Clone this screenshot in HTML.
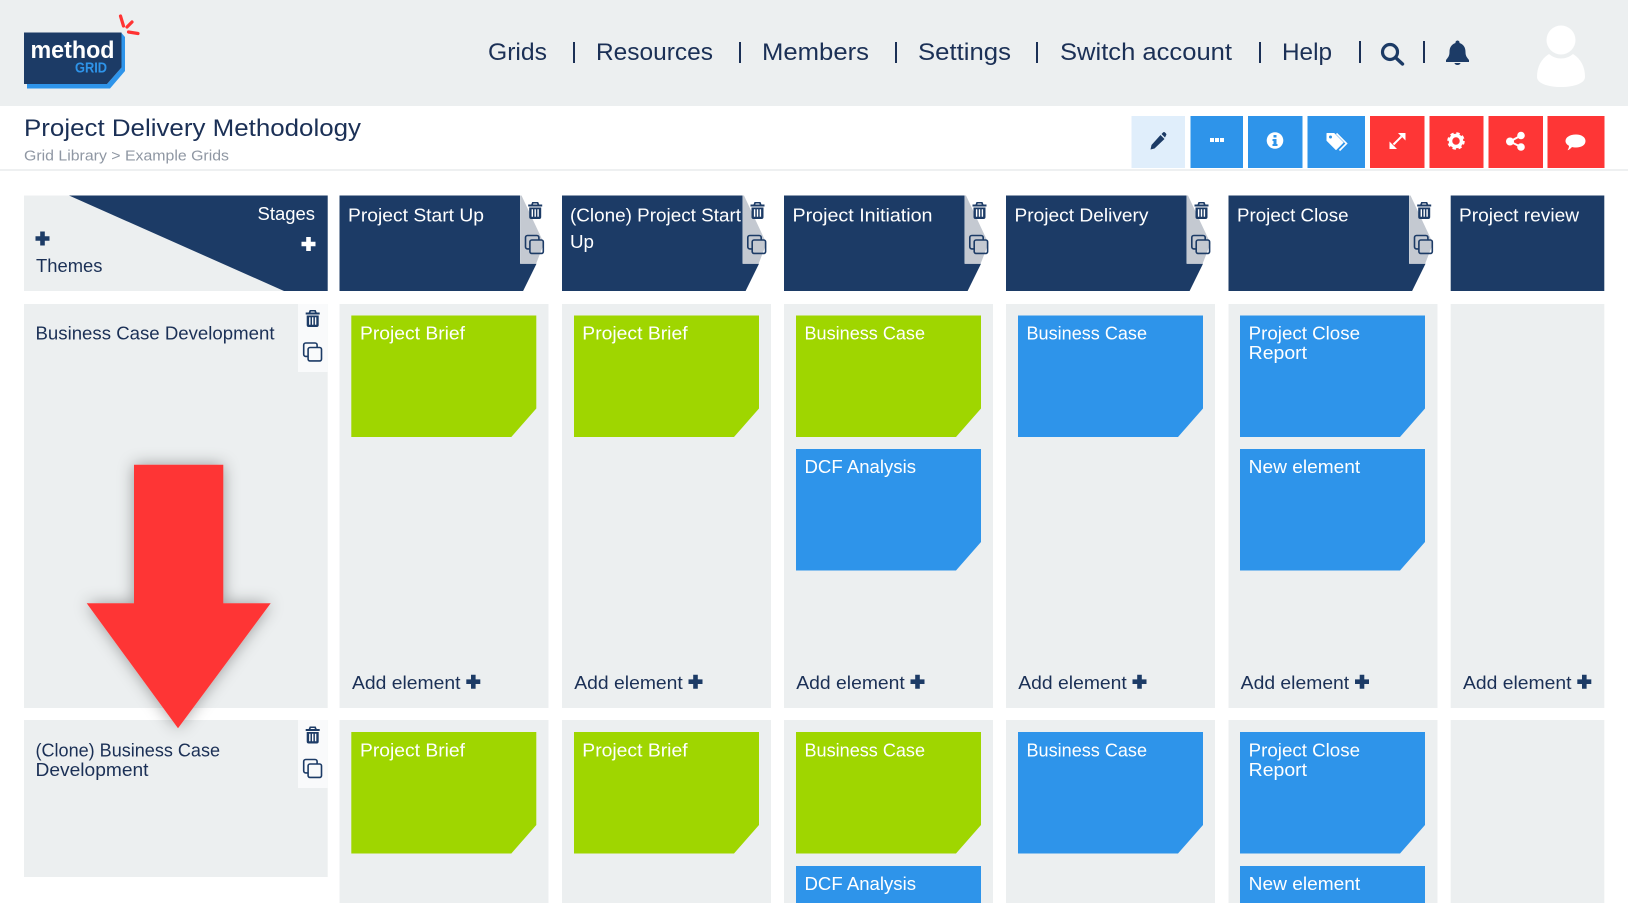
<!DOCTYPE html>
<html><head><meta charset="utf-8"><title>Project Delivery Methodology</title>
<style>
html,body{margin:0;padding:0;background:#fff;width:1628px;height:903px;overflow:hidden}
svg{display:block}
text{font-family:"Liberation Sans",sans-serif;font-size:18px}
.w{fill:#fff}.n{fill:#1b3056}
.nav{font-size:24.5px;fill:#1b3056}
</style></head><body>
<svg width="1628" height="903" viewBox="0 0 1628 903" xmlns="http://www.w3.org/2000/svg">
<defs>
<filter id="sh" x="-30%" y="-20%" width="160%" height="140%"><feDropShadow dx="0" dy="0" stdDeviation="8" flood-color="#000" flood-opacity=".36"/></filter>
<path id="c" d="M0 0H185V93L160 121.5H0Z"/>
<path id="p" d="M-2.3-7H2.3V-2.3H7V2.3H2.3V7H-2.3V2.3H-7V-2.3H-2.3Z" stroke-linejoin="round"/>
<path id="tr" fill-rule="evenodd" d="M-3-8.5H3L4-6H7V-4H-7V-6H-4ZM-1.8-7L-2.2-6H2.2L1.8-7ZM-6-3H6V6.5A2 2 0 0 1 4 8.5H-4A2 2 0 0 1-6 6.5ZM-3.6-1.2V6.2H-2.2V-1.2ZM-.7-1.2V6.2H.7V-1.2ZM2.2-1.2V6.2H3.6V-1.2Z"/>
<g id="cp" fill="none" stroke-width="1.6"><path d="M-5 3.4H-7A2 2 0 0 1-9 1.4V-8A2 2 0 0 1-7-10H2.4A2 2 0 0 1 4.4-8V-5.5"/><rect x="-4.6" y="-5.5" width="13.4" height="13.4" rx="1.8"/></g>
<g id="hd"><path d="M0 0H180.600V68.200H197L183.600 95.500H0Z" fill="#1c3b66"/><path d="M181 0H182L204.500 48 196.600 68.200H181Z" fill="#c4c9d1"/></g>
</defs>

<!-- top header -->
<rect width="1628" height="106" fill="#eceff0"/>
<rect y="169" width="1628" height="2" fill="#eef0f1"/>

<!-- logo -->
<path d="M27 88.500H110L125 71V37L121.500 33V67.500L107 84H27Z" fill="#2e94ea"/>
<path d="M24 32.500H121.500V67.500L107 84H24Z" fill="#1c3b66"/>
<text x="30.500" y="58" class="w" style="font-size:24px;font-weight:bold" textLength="84" lengthAdjust="spacingAndGlyphs">method</text>
<text x="75" y="72.500" style="font-size:14.500px;font-weight:bold;fill:#2e94ea" textLength="32" lengthAdjust="spacingAndGlyphs">GRID</text>
<g stroke="#f33" stroke-width="3.200" stroke-linecap="round"><path d="M120.500 16L123.500 26M132 22L127 27M128.500 32L138 33.500"/></g>

<!-- nav -->
<text x="488" y="60" class="nav" textLength="59" lengthAdjust="spacingAndGlyphs">Grids</text>
<text x="596" y="60" class="nav" textLength="117" lengthAdjust="spacingAndGlyphs">Resources</text>
<text x="762" y="60" class="nav" textLength="107" lengthAdjust="spacingAndGlyphs">Members</text>
<text x="918" y="60" class="nav" textLength="93" lengthAdjust="spacingAndGlyphs">Settings</text>
<text x="1060" y="60" class="nav" textLength="172" lengthAdjust="spacingAndGlyphs">Switch account</text>
<text x="1282" y="60" class="nav" textLength="50" lengthAdjust="spacingAndGlyphs">Help</text>
<g fill="#1b3056"><rect x="573" y="42" width="2" height="21"/><rect x="739" y="42" width="2" height="21"/><rect x="895" y="42" width="2" height="21"/><rect x="1036" y="42" width="2" height="21"/><rect x="1259" y="42" width="2" height="21"/><rect x="1359" y="41" width="2" height="22"/><rect x="1423" y="41" width="2" height="22"/></g>
<circle cx="1390" cy="52" r="7.500" fill="none" stroke="#1c3b66" stroke-width="3.200"/>
<path d="M1395.500 57.500L1402.500 64" stroke="#1c3b66" stroke-width="3.400" stroke-linecap="round"/>
<path d="M1457.500 40.500A2 2 0 0 1 1459.500 43C1464 44.500 1465.500 48 1465.500 52C1465.500 56 1467 57.500 1469 60V62H1446V60C1448 57.500 1449.500 56 1449.500 52C1449.500 48 1451 44.500 1455.500 43A2 2 0 0 1 1457.500 40.500ZM1454.500 63H1460.500A3 2 0 0 1 1454.500 63Z" fill="#1c3b66"/>
<circle cx="1561" cy="40" r="14.500" fill="#fff"/>
<path d="M1549 54C1556 60 1566 60 1573 54C1581 59 1585 67 1585 77C1585 83 1575 87 1561 87C1547 87 1537 83 1537 77C1537 67 1541 59 1549 54Z" fill="#fff"/>

<!-- title -->
<text x="24" y="136" class="n" style="font-size:24.500px" textLength="337" lengthAdjust="spacingAndGlyphs">Project Delivery Methodology</text>
<text x="24" y="160.500" style="font-size:15px;fill:#8f97a3" textLength="205" lengthAdjust="spacingAndGlyphs">Grid Library &gt; Example Grids</text>

<!-- toolbar -->
<rect x="1131.500" y="116" width="53.500" height="52" fill="#e0eefb"/>
<g fill="#2e94ea"><rect x="1190.500" y="116" width="52.500" height="52"/><rect x="1248" y="116" width="54.500" height="52"/><rect x="1307.500" y="116" width="57.500" height="52"/></g>
<g fill="#fe3636"><rect x="1370" y="116" width="54.500" height="52"/><rect x="1429.500" y="116" width="54" height="52"/><rect x="1488.500" y="116" width="54.500" height="52"/><rect x="1547.500" y="116" width="57" height="52"/></g>
<path d="M1160.500 135L1164.500 139L1154.500 148.500L1150.500 149.500L1151.500 145ZM1161.500 134L1163 132.500A1.500 1.500 0 0 1 1165 132.500L1166 133.500A1.500 1.500 0 0 1 1166 135.500L1165 137.500Z" fill="#1c3b66"/>
<g fill="#fff"><rect x="1210" y="138" width="4" height="4"/><rect x="1215" y="138" width="4" height="4"/><rect x="1220" y="138" width="4" height="4"/></g>
<circle cx="1275" cy="140.500" r="8.300" fill="#fff"/><path d="M1273.500 135H1276.500V137.500H1273.500ZM1272.500 139H1276.500V144H1277.500V146H1272.500V144H1273.500V141H1272.500Z" fill="#2e94ea"/>
<path d="M1327 133.500H1334L1343 142.500L1336 149.500L1327 140.500Z" fill="#fff" stroke="#fff" stroke-width="1" stroke-linejoin="round"/>
<path d="M1336.500 133.500L1346.500 143.500L1339.500 150.500" fill="none" stroke="#fff" stroke-width="1.600"/>
<circle cx="1330.500" cy="137" r="1.500" fill="#2e94ea"/>
<path d="M1393.500 144.500L1401.500 136.500" fill="none" stroke="#fff" stroke-width="2"/>
<path d="M1398 133H1405.500V140.500L1402.800 137.800L1400.700 135.700ZM1397 149H1389.500V141.500L1392.200 144.200L1394.300 146.300Z" fill="#fff"/>
<circle cx="1456" cy="141" r="5.500" fill="none" stroke="#fff" stroke-width="3.500"/><circle cx="1456" cy="141" r="7.500" fill="none" stroke="#fff" stroke-width="2.500" stroke-dasharray="3.300 2.600"/>
<g fill="#fff"><circle cx="1510" cy="141.500" r="4"/><circle cx="1521" cy="135.500" r="3.800"/><circle cx="1521" cy="147" r="3.800"/></g><path d="M1521 135.500L1510 141.500L1521 147" fill="none" stroke="#fff" stroke-width="2"/>
<path d="M1576 134.500C1582 134.500 1585.500 137.500 1585.500 141C1585.500 145 1581.500 147.500 1576 147.500C1574.500 147.500 1573 147.300 1572 147C1570.500 148.500 1569 150 1567.500 150.300C1568.500 148.800 1569 147.300 1569 145.800C1567 144.800 1565.500 143 1565.500 141C1565.500 137.500 1569.500 134.500 1576 134.500Z" fill="#fff"/>

<!-- stages/themes corner -->
<rect x="24" y="195.500" width="303.700" height="95.500" fill="#eceff0"/>
<path d="M69 195.500H327.700V291H284Z" fill="#1c3b66"/>
<text x="257.500" y="220" class="w" textLength="57.500" lengthAdjust="spacingAndGlyphs">Stages</text>
<text x="36" y="272" class="n" textLength="66.500" lengthAdjust="spacingAndGlyphs">Themes</text>
<use href="#p" x="42.500" y="238.500" fill="#1c3b66"/>
<use href="#p" x="308.500" y="244" fill="#fff"/>

<!-- stage headers -->
<use href="#hd" x="339.500" y="195.500"/><use href="#hd" x="562" y="195.500"/><use href="#hd" x="784" y="195.500"/><use href="#hd" x="1006" y="195.500"/><use href="#hd" x="1228.500" y="195.500"/>
<rect x="1450.700" y="195.500" width="153.600" height="95.500" fill="#1c3b66"/>
<text x="348" y="221.500" class="w" textLength="136" lengthAdjust="spacingAndGlyphs">Project Start Up</text>
<text x="570" y="221.500" class="w" textLength="171" lengthAdjust="spacingAndGlyphs">(Clone) Project Start</text>
<text x="570" y="248" class="w" textLength="24" lengthAdjust="spacingAndGlyphs">Up</text>
<text x="792.500" y="221.500" class="w" textLength="140" lengthAdjust="spacingAndGlyphs">Project Initiation</text>
<text x="1014.500" y="221.500" class="w" textLength="134" lengthAdjust="spacingAndGlyphs">Project Delivery</text>
<text x="1237" y="221.500" class="w" textLength="111.500" lengthAdjust="spacingAndGlyphs">Project Close</text>
<text x="1459" y="221.500" class="w" textLength="120" lengthAdjust="spacingAndGlyphs">Project review</text>
<g fill="#1c3b66"><use href="#tr" x="535.200" y="210.500"/><use href="#tr" x="757.500" y="210.500"/><use href="#tr" x="979.500" y="210.500"/><use href="#tr" x="1201.500" y="210.500"/><use href="#tr" x="1424.200" y="210.500"/></g>
<g stroke="#1c3b66"><use href="#cp" x="534.500" y="245.500"/><use href="#cp" x="756.800" y="245.500"/><use href="#cp" x="978.800" y="245.500"/><use href="#cp" x="1200.800" y="245.500"/><use href="#cp" x="1423.500" y="245.500"/></g>

<!-- row backgrounds -->
<g fill="#eceff0">
<rect x="24" y="304" width="303.700" height="404"/><rect x="24" y="720" width="303.700" height="157"/>
<rect x="339.500" y="304" width="209" height="404"/><rect x="562" y="304" width="209" height="404"/><rect x="784" y="304" width="209" height="404"/><rect x="1006" y="304" width="209" height="404"/><rect x="1228.500" y="304" width="209" height="404"/><rect x="1450.700" y="304" width="153.600" height="404"/>
<rect x="339.500" y="720" width="209" height="183"/><rect x="562" y="720" width="209" height="183"/><rect x="784" y="720" width="209" height="183"/><rect x="1006" y="720" width="209" height="183"/><rect x="1228.500" y="720" width="209" height="183"/><rect x="1450.700" y="720" width="153.600" height="183"/>
</g>
<rect x="298" y="304" width="29.700" height="68" fill="#f9fafb"/><rect x="298" y="720" width="29.700" height="68" fill="#f9fafb"/>
<use href="#tr" x="312.700" y="318.500" fill="#1c3b66"/><use href="#tr" x="312.700" y="735" fill="#1c3b66"/>
<g stroke="#1c3b66"><use href="#cp" x="312.700" y="353"/><use href="#cp" x="312.700" y="769.500"/></g>

<!-- cards -->
<g fill="#9fd600"><use href="#c" x="351.300" y="315.500"/><use href="#c" x="574" y="315.500"/><use href="#c" x="796" y="315.500"/><use href="#c" x="351.300" y="732"/><use href="#c" x="574" y="732"/><use href="#c" x="796" y="732"/></g>
<g fill="#2e94ea"><use href="#c" x="796" y="449"/><use href="#c" x="1018" y="315.500"/><use href="#c" x="1240" y="315.500"/><use href="#c" x="1240" y="449"/><use href="#c" x="1018" y="732"/><use href="#c" x="1240" y="732"/><rect x="796" y="866" width="185" height="37"/><rect x="1240" y="866" width="185" height="37"/></g>

<text x="35.500" y="339.500" class="n" textLength="239" lengthAdjust="spacingAndGlyphs">Business Case Development</text>
<text x="35.500" y="756.500" class="n" textLength="184.500" lengthAdjust="spacingAndGlyphs">(Clone) Business Case</text>
<text x="35.500" y="776" class="n" textLength="113" lengthAdjust="spacingAndGlyphs">Development</text>

<g class="w" fill="#fff">
<text x="360" y="339.500" textLength="105" lengthAdjust="spacingAndGlyphs">Project Brief</text>
<text x="582.300" y="339.500" textLength="105.300" lengthAdjust="spacingAndGlyphs">Project Brief</text>
<text x="804.500" y="339.500" textLength="120.500" lengthAdjust="spacingAndGlyphs">Business Case</text>
<text x="804.500" y="473" textLength="111.500" lengthAdjust="spacingAndGlyphs">DCF Analysis</text>
<text x="1026.500" y="339.500" textLength="120.500" lengthAdjust="spacingAndGlyphs">Business Case</text>
<text x="1248.700" y="339.500" textLength="111.300" lengthAdjust="spacingAndGlyphs">Project Close</text>
<text x="1248.700" y="359" textLength="58.300" lengthAdjust="spacingAndGlyphs">Report</text>
<text x="1248.700" y="473" textLength="111.500" lengthAdjust="spacingAndGlyphs">New element</text>
<text x="360" y="756.700" textLength="105" lengthAdjust="spacingAndGlyphs">Project Brief</text>
<text x="582.300" y="756.700" textLength="105.300" lengthAdjust="spacingAndGlyphs">Project Brief</text>
<text x="804.500" y="756.700" textLength="120.500" lengthAdjust="spacingAndGlyphs">Business Case</text>
<text x="804.500" y="890" textLength="111.500" lengthAdjust="spacingAndGlyphs">DCF Analysis</text>
<text x="1026.500" y="756.700" textLength="120.500" lengthAdjust="spacingAndGlyphs">Business Case</text>
<text x="1248.700" y="756.700" textLength="111.300" lengthAdjust="spacingAndGlyphs">Project Close</text>
<text x="1248.700" y="776" textLength="58.300" lengthAdjust="spacingAndGlyphs">Report</text>
<text x="1248.700" y="890" textLength="111.500" lengthAdjust="spacingAndGlyphs">New element</text>
</g>

<!-- add element -->
<g fill="#1b3056">
<text x="352" y="689" textLength="108.500" lengthAdjust="spacingAndGlyphs">Add element</text>
<text x="574.300" y="689" textLength="108.500" lengthAdjust="spacingAndGlyphs">Add element</text>
<text x="796.300" y="689" textLength="108.500" lengthAdjust="spacingAndGlyphs">Add element</text>
<text x="1018.300" y="689" textLength="108.500" lengthAdjust="spacingAndGlyphs">Add element</text>
<text x="1240.700" y="689" textLength="108.500" lengthAdjust="spacingAndGlyphs">Add element</text>
<text x="1463" y="689" textLength="108.500" lengthAdjust="spacingAndGlyphs">Add element</text>
</g>
<g fill="#1c3b66"><use href="#p" x="473.300" y="681.700"/><use href="#p" x="695.500" y="681.700"/><use href="#p" x="917.500" y="681.700"/><use href="#p" x="1139.500" y="681.700"/><use href="#p" x="1362" y="681.700"/><use href="#p" x="1584.300" y="681.700"/></g>

<!-- arrow -->
<path d="M134 464.700H223.300V603.300H270.700L178 728.300L86.700 603.300H134Z" fill="#fe3636" filter="url(#sh)"/>
</svg>
</body></html>
